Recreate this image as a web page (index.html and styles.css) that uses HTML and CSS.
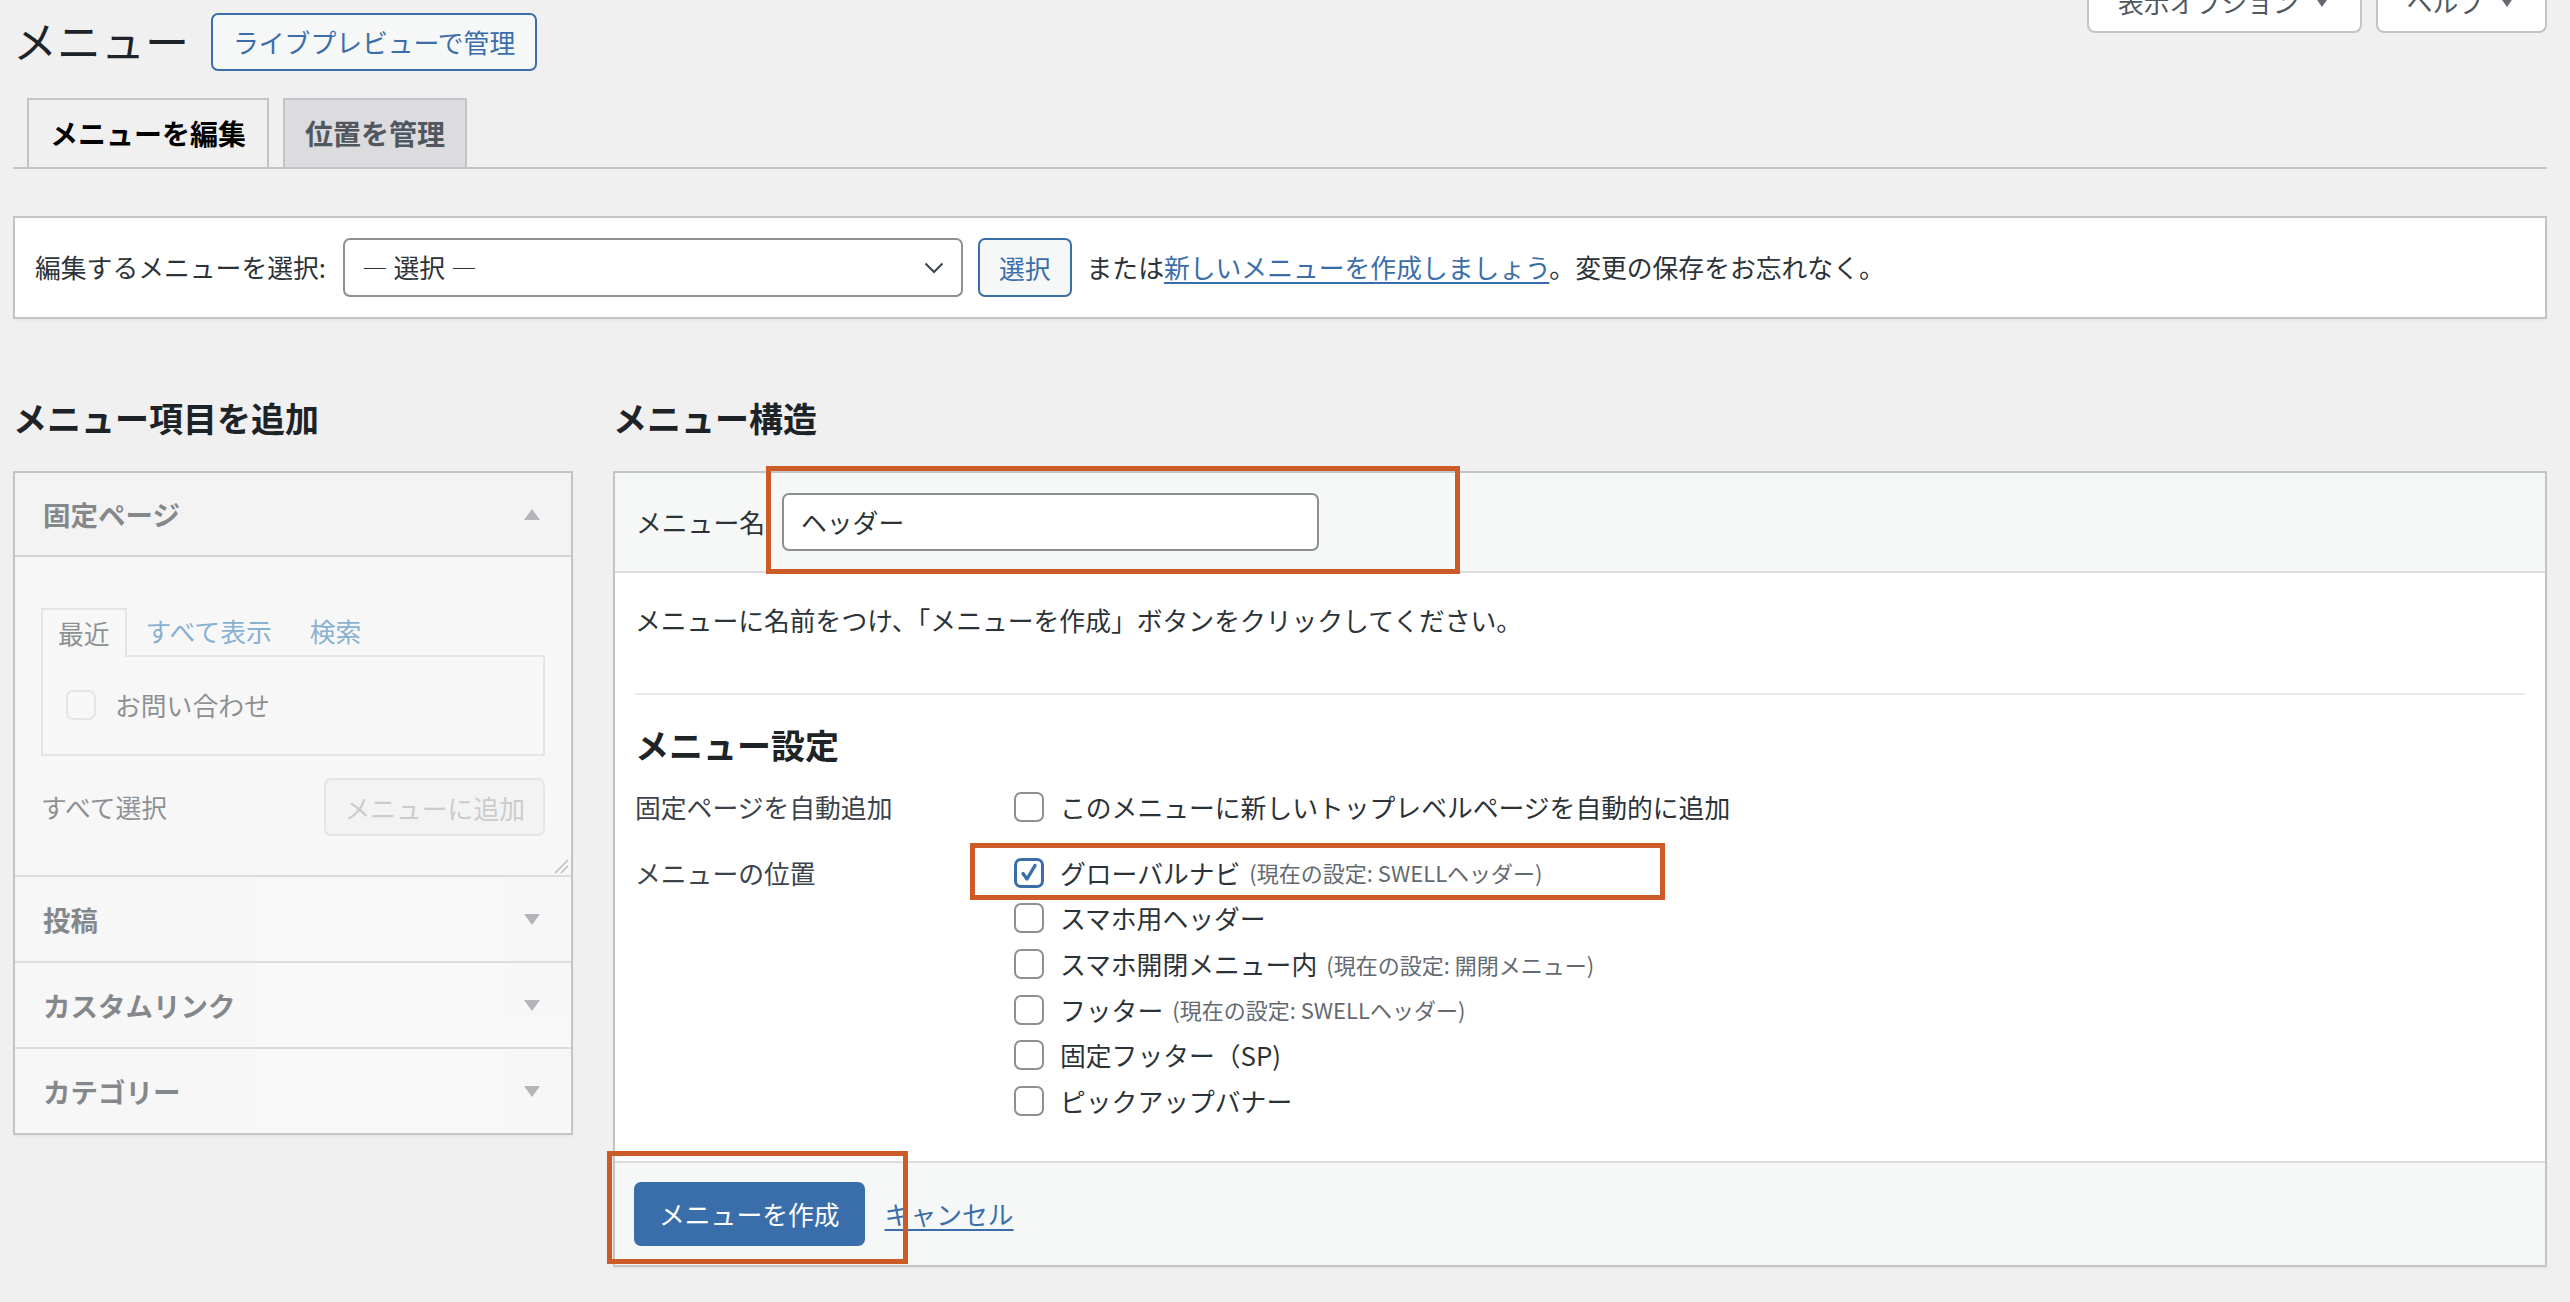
FILE: index.html
```html
<!DOCTYPE html>
<html lang="ja">
<head>
<meta charset="utf-8">
<title>メニュー</title>
<link rel="stylesheet" href="styles.css">
</head>
<body>
<div class="page">
  <header class="head">
    <div class="head-left">
      <h1 class="title">メニュー</h1>
      <a class="btn-outline" href="#">ライブプレビューで管理</a>
    </div>
    <div class="screen-meta">
      <button class="meta-btn">表示オプション<span class="meta-arrow"></span></button>
      <button class="meta-btn">ヘルプ<span class="meta-arrow"></span></button>
    </div>
  </header>

  <nav class="tabs">
    <a class="tab tab-active" href="#">メニューを編集</a>
    <a class="tab" href="#">位置を管理</a>
  </nav>

  <div class="manage">
    <span class="manage-label">編集するメニューを選択:</span>
    <div class="select">
      <span>— 選択 —</span>
      <svg class="chev" width="20" height="12" viewBox="0 0 20 12"><path d="M1.5 1.5 L10 10 L18.5 1.5" fill="none" stroke="#3c434a" stroke-width="2"/></svg>
    </div>
    <button class="btn-secondary">選択</button>
    <span class="manage-text">または<a class="link" href="#">新しいメニューを作成しましょう</a>。変更の保存をお忘れなく。</span>
  </div>

  <div class="cols">
    <section class="col-left">
      <h2 class="col-title">メニュー項目を追加</h2>
      <div class="acc">
        <div class="acc-section acc-open">
          <div class="acc-title acc-title-open">
            <h3 class="acc-name">固定ページ</h3>
            <span class="tri tri-up"></span>
          </div>
          <div class="acc-content">
            <div class="inner-tabs">
              <span class="inner-tab inner-tab-active">最近</span>
              <span class="inner-link">すべて表示</span>
              <span class="inner-link">検索</span>
            </div>
            <div class="inner-panel">
              <label class="inner-item"><span class="cb cb-disabled"></span>お問い合わせ</label>
            </div>
            <div class="inner-actions">
              <span>すべて選択</span>
              <button class="btn-disabled">メニューに追加</button>
            </div>
            <svg class="resize" width="16" height="16" viewBox="0 0 16 16"><path d="M15 2 L2 15 M15 8 L8 15" stroke="#8c8f94" stroke-width="1.5" fill="none"/></svg>
          </div>
        </div>
        <div class="acc-section">
          <div class="acc-title"><h3 class="acc-name">投稿</h3><span class="tri"></span></div>
        </div>
        <div class="acc-section">
          <div class="acc-title"><h3 class="acc-name">カスタムリンク</h3><span class="tri"></span></div>
        </div>
        <div class="acc-section acc-last">
          <div class="acc-title"><h3 class="acc-name">カテゴリー</h3><span class="tri"></span></div>
        </div>
      </div>
    </section>

    <section class="col-right">
      <h2 class="col-title">メニュー構造</h2>
      <div class="menu-panel">
        <div class="menu-header">
          <span class="menu-name-label">メニュー名</span>
          <div class="text-input">ヘッダー</div>
        </div>
        <div class="menu-body">
          <p class="desc">メニューに名前をつけ、「メニューを作成」ボタンをクリックしてください。</p>
          <div class="divider"></div>
          <h3 class="settings-title">メニュー設定</h3>
          <div class="set-row">
            <div class="set-label">固定ページを自動追加</div>
            <div class="set-opts">
              <label class="opt"><span class="cb"></span>このメニューに新しいトップレベルページを自動的に追加</label>
            </div>
          </div>
          <div class="set-row set-row-loc">
            <div class="set-label">メニューの位置</div>
            <div class="set-opts">
              <label class="opt"><span class="cb cb-checked"><svg width="24" height="24" viewBox="0 0 24 24"><path d="M6 12.5 L10 18 L18 4.5" fill="none" stroke="#3a6eaa" stroke-width="3.4" stroke-linecap="round" stroke-linejoin="round"/></svg></span>グローバルナビ<span class="loc-set">(現在の設定: SWELLヘッダー)</span></label>
              <label class="opt"><span class="cb"></span>スマホ用ヘッダー</label>
              <label class="opt"><span class="cb"></span>スマホ開閉メニュー内<span class="loc-set">(現在の設定: 開閉メニュー)</span></label>
              <label class="opt"><span class="cb"></span>フッター<span class="loc-set">(現在の設定: SWELLヘッダー)</span></label>
              <label class="opt"><span class="cb"></span>固定フッター（SP)</label>
              <label class="opt"><span class="cb"></span>ピックアップバナー</label>
            </div>
          </div>
        </div>
        <div class="menu-footer">
          <button class="btn-primary">メニューを作成</button>
          <a class="link cancel" href="#">キャンセル</a>
        </div>
      </div>
    </section>
  </div>

  <div class="mark mark-name"></div>
  <div class="mark mark-loc"></div>
  <div class="mark mark-save"></div>
</div>
</body>
</html>
```

FILE: styles.css
```css
* { box-sizing: border-box; }

html, body {
  margin: 0;
  padding: 0;
}

body {
  width: 2570px;
  height: 1302px;
  overflow: hidden;
  background: #f0f0f1;
  color: #2c3338;
  font-family: "Noto Sans CJK JP", "Noto Sans", sans-serif;
  font-size: 25.8px;
  line-height: 1.4;
}

.page {
  position: relative;
  padding: 0 23px 0 13px;
}

/* ---------- header ---------- */
.head {
  display: flex;
  justify-content: space-between;
  align-items: flex-start;
}

.head-left {
  display: flex;
  align-items: center;
  gap: 22px;
  padding-top: 13px;
}

.title {
  margin: -4px 0 0;
  font-size: 44px;
  font-weight: 400;
  line-height: 58px;
  color: #1d2327;
}

.btn-outline {
  display: inline-flex;
  align-items: center;
  height: 58px;
  padding: 0 20px;
  border: 2px solid #3a6eaa;
  border-radius: 7px;
  background: #f6f7f7;
  color: #3a6eaa;
  text-decoration: none;
  font-size: 25.8px;
}

.screen-meta {
  display: flex;
  gap: 14px;
  margin-top: -28px;
}

.meta-btn {
  display: flex;
  align-items: center;
  height: 61px;
  padding: 0 31px 0 29px;
  background: #fff;
  border: 2px solid #c3c4c7;
  border-top: none;
  border-radius: 0 0 8px 8px;
  color: #50575e;
  font-family: inherit;
  font-size: 25.8px;
}

.meta-arrow {
  width: 0;
  height: 0;
  margin-left: 16px;
  border-left: 7px solid transparent;
  border-right: 7px solid transparent;
  border-top: 10px solid #646970;
}

/* ---------- tabs ---------- */
.tabs {
  display: flex;
  gap: 14px;
  margin-top: 27px;
  padding-left: 14px;
  border-bottom: 2px solid #c3c4c7;
}

.tab {
  display: flex;
  align-items: center;
  height: 69px;
  padding: 0 20px;
  border: 2px solid #c3c4c7;
  border-bottom: none;
  background: #dcdcde;
  color: #50575e;
  font-size: 28px;
  font-weight: 700;
  text-decoration: none;
}

.tab-active {
  background: #f0f0f1;
  color: #000;
  padding: 0 21px;
}

/* ---------- manage bar ---------- */
.manage {
  display: flex;
  align-items: center;
  height: 103px;
  margin-top: 47px;
  padding: 0 20px;
  background: #fff;
  border: 2px solid #c3c4c7;
  box-shadow: 0 2px 2px rgba(0, 0, 0, 0.04);
}

.manage-label {
  margin-right: 17px;
  color: #2c3338;
}

.select {
  display: flex;
  align-items: center;
  justify-content: space-between;
  width: 620px;
  height: 59px;
  padding: 0 17px 0 17px;
  background: #fff;
  border: 2px solid #8c8f94;
  border-radius: 7px;
  color: #2c3338;
}

.btn-secondary {
  height: 59px;
  margin: 0 15px;
  padding: 0 19px;
  background: #f6f7f7;
  border: 2px solid #3a6eaa;
  border-radius: 7px;
  color: #3a6eaa;
  font-family: inherit;
  font-size: 25.8px;
}

.link {
  color: #3a6eaa;
  text-decoration: underline;
  text-underline-offset: 4px;
  text-decoration-thickness: 2px;
}

/* ---------- columns ---------- */
.cols {
  display: flex;
  gap: 40px;
  margin-top: 79px;
  align-items: flex-start;
}

.col-left {
  width: 560px;
  flex: none;
}

.col-right {
  flex: 1;
}

.col-title {
  margin: 0 0 33px;
  font-size: 34px;
  font-weight: 700;
  line-height: 40px;
  color: #1d2327;
}

/* ---------- accordion ---------- */
.acc {
  border: 2px solid #c3c4c7;
  background: #f0f0f1;
  box-shadow: 0 2px 2px rgba(0, 0, 0, 0.04);
}

.acc-section {
  border-bottom: 2px solid #dcdcde;
}

.acc-last {
  border-bottom: none;
}

.acc-title {
  display: flex;
  align-items: center;
  justify-content: space-between;
  height: 84px;
  padding: 0 31px 0 28px;
  background: #fff;
  opacity: 0.5;
}

.acc-title-open {
  height: 84px;
  background: #f6f7f7;
  border-bottom: 2px solid #b9babd;
}

.acc-name {
  margin: 0;
  font-size: 27.5px;
  font-weight: 700;
  line-height: 40px;
  color: #1d2327;
}

.tri {
  width: 0;
  height: 0;
  border-left: 8px solid transparent;
  border-right: 8px solid transparent;
  border-top: 11px solid #787c82;
}

.tri-up {
  border-top: none;
  border-bottom: 11px solid #787c82;
}

.acc-content {
  position: relative;
  height: 318px;
  padding: 51px 26px 0;
  background: #fff;
  opacity: 0.5;
}

.inner-tabs {
  display: flex;
  align-items: flex-end;
  height: 47px;
}

.inner-tab {
  display: flex;
  align-items: center;
  height: 49px;
  margin-bottom: -2px;
  padding: 0 15px;
  border: 2px solid #dcdcde;
  border-bottom: none;
  background: #fff;
  color: #2c3338;
  position: relative;
  z-index: 1;
}

.inner-link {
  display: flex;
  align-items: center;
  height: 47px;
  padding: 0 19px;
  color: #2271b1;
}

.inner-panel {
  display: flex;
  align-items: center;
  height: 101px;
  padding: 0 23px;
  border: 2px solid #dcdcde;
  background: #fff;
}

.inner-item {
  display: flex;
  align-items: center;
  gap: 19px;
  color: #2c3338;
}

.inner-actions {
  display: flex;
  align-items: center;
  justify-content: space-between;
  height: 58px;
  margin-top: 22px;
  color: #2c3338;
}

.btn-disabled {
  height: 58px;
  padding: 0 18px;
  background: #f6f7f7;
  border: 2px solid #dcdcde;
  border-radius: 7px;
  color: #a7aaad;
  font-family: inherit;
  font-size: 25.8px;
}

.resize {
  position: absolute;
  right: 2px;
  bottom: 1px;
}

/* ---------- checkboxes ---------- */
.cb {
  display: inline-flex;
  align-items: center;
  justify-content: center;
  flex: none;
  width: 30px;
  height: 30px;
  background: #fff;
  border: 2px solid #8c8f94;
  border-radius: 7px;
}

.cb-disabled {
  border-color: #dcdcde;
}

.cb-checked {
  border: 3px solid #3a6eaa;
}

/* ---------- menu panel ---------- */
.menu-panel {
  background: #fff;
  border: 2px solid #c3c4c7;
  box-shadow: 0 2px 2px rgba(0, 0, 0, 0.04);
}

.menu-header {
  display: flex;
  align-items: center;
  height: 100px;
  padding: 0 21px;
  background: #f6f7f7;
  border-bottom: 2px solid #dcdcde;
}

.menu-name-label {
  margin-right: 17px;
  color: #2c3338;
}

.text-input {
  display: flex;
  align-items: center;
  width: 537px;
  height: 58px;
  padding: 0 17px;
  background: #fff;
  border: 2px solid #8c8f94;
  border-radius: 7px;
  color: #2c3338;
}

.menu-body {
  padding: 27px 20px 37px;
}

.desc {
  margin: 0;
  line-height: 40px;
  color: #2c3338;
}

.divider {
  height: 2px;
  margin-top: 53px;
  background: #ebebec;
}

.settings-title {
  margin: 28px 0 0;
  font-size: 34px;
  font-weight: 700;
  line-height: 44px;
  color: #1d2327;
}

.set-row {
  display: grid;
  grid-template-columns: 379px 1fr;
  margin-top: 17px;
}

.set-row-loc {
  margin-top: 20px;
}

.set-label {
  line-height: 46px;
  color: #3c434a;
}

.set-opts {
  display: flex;
  flex-direction: column;
}

.opt {
  display: flex;
  align-items: center;
  height: 45.6px;
  color: #2c3338;
}

.opt .cb {
  margin-right: 16px;
}

.set-row:first-of-type .opt {
  height: 46px;
}

.loc-set {
  margin-left: 9px;
  font-size: 22px;
  color: #646970;
}

.menu-footer {
  display: flex;
  align-items: center;
  gap: 20px;
  height: 104px;
  padding: 0 19px;
  background: #f6f7f7;
  border-top: 2px solid #dcdcde;
}

.btn-primary {
  height: 64px;
  padding: 0 25px;
  background: #3a6eaa;
  border: none;
  border-radius: 7px;
  color: #fff;
  font-family: inherit;
  font-size: 25.8px;
}

.cancel {
  font-size: 25.8px;
}

/* ---------- annotation marks ---------- */
.mark {
  position: absolute;
  border: 5px solid #cd5b28;
  pointer-events: none;
}

.mark-name {
  left: 766px;
  top: 466px;
  width: 694px;
  height: 108px;
}

.mark-loc {
  left: 970px;
  top: 843px;
  width: 695px;
  height: 57px;
}

.mark-save {
  left: 607px;
  top: 1151px;
  width: 301px;
  height: 113px;
}
```
